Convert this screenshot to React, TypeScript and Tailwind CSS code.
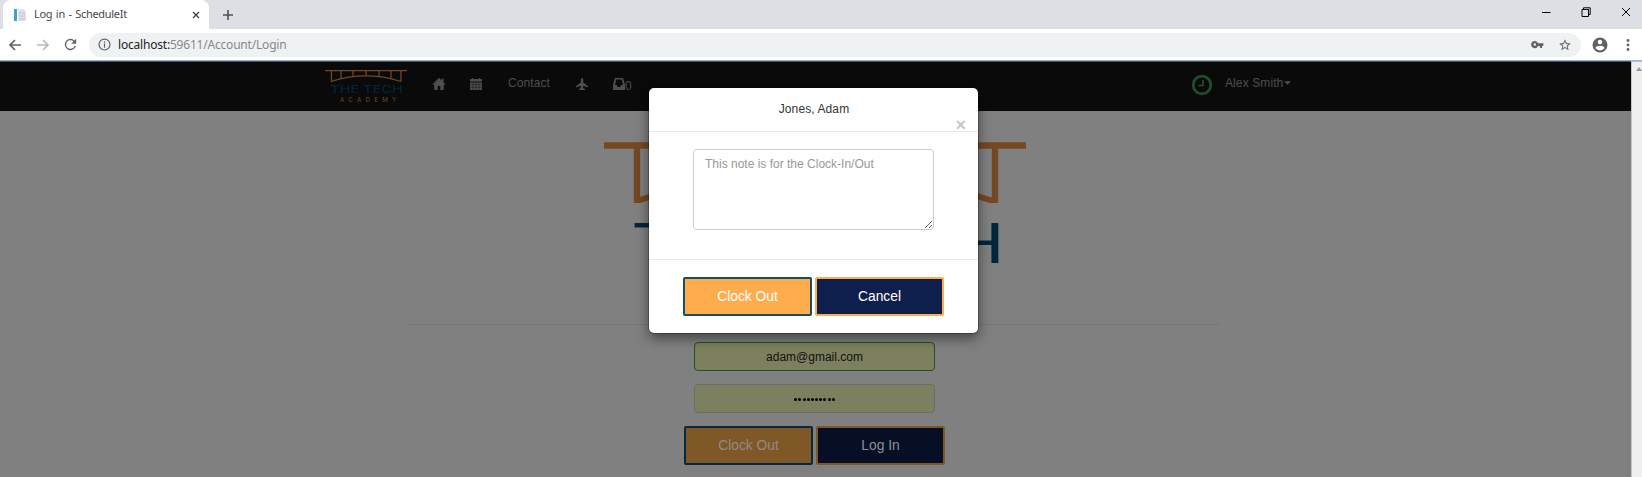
import React from "react";

function Logo({ className, caption }: { className: string; caption?: string }) {
  return (
    <svg viewBox="0 0 422 170" className={className} fill="none">
      <path d="M0 3.5H422M33 3V61M82 3V44M144 3V34M211 3V30M278 3V34M340 3V44M391 3V61" stroke="#754824" strokeWidth="6.4" />
      <path d="M33 58H36Q120 30 211 30T386 58H391" stroke="#754824" strokeWidth="6" />
      <text x="27" y="121" fontSize="55" textLength="374" lengthAdjust="spacingAndGlyphs" fontFamily="Inter, sans-serif" fill="#00273d">THE TECH</text>
      {caption && (
        <text x="77" y="166" fontSize="32" textLength="290" fontFamily="Inter, sans-serif" fill="#754824">{caption}</text>
      )}
    </svg>
  );
}

function Browser() {
  return (
    <header className="flex h-[62px] shrink-0 flex-col font-['Noto_Sans',sans-serif]">
      <div className="flex h-[29px] bg-[#dcdfe4]">
        <div className="ml-[3px] flex w-[206px] items-center rounded-t-lg bg-white pl-[10px] pr-[9px] text-[11px] text-[#45484c]">
          <svg viewBox="0 0 14 14" className="size-[14px]">
            <path d="M1 1H4V13H1z" fill="#459dcb" />
            <path d="M5 1H11L13 4V13H5z" fill="#e0e3e7" />
            <path d="M6 5H12M6 8H12M6 11H12" stroke="#bfc5ce" />
          </svg>
          <span className="ml-[7px] flex-1 whitespace-nowrap tracking-[-0.3px] [word-spacing:1px]">Log in&nbsp;-&nbsp;ScheduleIt</span>
          <svg viewBox="0 0 8 8" className="size-2"><path d="M1 1L7 7M7 1L1 7" stroke="#444" strokeWidth="1.4" /></svg>
        </div>
        <svg viewBox="0 0 12 12" className="ml-[13px] mt-[9px] size-3"><path d="M6 1V11M1 6H11" stroke="#4f5358" strokeWidth="1.6" /></svg>
        <div className="ml-auto mr-[11px] flex items-center gap-[30px] pb-[5px] text-black">
          <svg viewBox="0 0 10 10" className="size-[10px]"><path d="M1 5.5H9.5" stroke="currentColor" /></svg>
          <svg viewBox="0 0 10 10" className="size-[10px]" fill="none"><path d="M1 2.5H7.5V9.5H1zM2.5 2V.8H9.2V7.5H8" stroke="currentColor" /></svg>
          <svg viewBox="0 0 10 10" className="size-[10px]"><path d="M1 1L9 9M9 1L1 9" stroke="currentColor" /></svg>
        </div>
      </div>
      <div className="flex h-[31px] items-center bg-white pl-2 pr-[12px]">
        <svg viewBox="0 0 14 14" className="size-[14px]" fill="none"><path d="M13 7H2M7 2L2 7L7 12" stroke="#5f6368" strokeWidth="1.7" /></svg>
        <svg viewBox="0 0 14 14" className="ml-[14px] size-[14px]" fill="none"><path d="M1 7H12M7 2L12 7L7 12" stroke="#b7b9bc" strokeWidth="1.7" /></svg>
        <svg viewBox="0 0 24 24" className="ml-[12px] size-[17px]"><path fill="#5f6368" d="M17.65 6.35A8 8 0 1 0 19.73 14h-2.08A6 6 0 1 1 12 6c1.66 0 3.14.69 4.22 1.78L13 11h7V4z" /></svg>
        <div className="ml-[10px] flex h-6 flex-1 items-center rounded-full bg-[#eff2f3] pl-[9px] pr-[9px]">
          <svg viewBox="0 0 14 14" className="size-[13px]" fill="none" stroke="#5f6368" strokeWidth="1.3"><circle cx="7" cy="7" r="5.9" /><path d="M7 6V10.5M7 3.5V5" /></svg>
          <span className="ml-[7px] flex-1 text-[12px] tracking-[-0.2px] text-[#85898d]"><span className="text-[#222]">localhost:</span>59611/Account/Login</span>
          <svg viewBox="0 0 14 10" className="mr-[14px] h-[9px] w-[13px]"><path fillRule="evenodd" fill="#5f6368" d="M4 1A4 4 0 1 0 7.6 6.6H9.7V9H12V6.6H13.5V3.5H7.6A4 4 0 0 0 4 1zM4 3.7A1.3 1.3 0 1 1 4 6.4A1.3 1.3 0 0 1 4 3.7z" /></svg>
          <svg viewBox="0 0 24 24" className="size-[14px]"><path fill="#5f6368" d="M22 9.24l-7.19-.62L12 2 9.19 8.63 2 9.24l5.46 4.73L5.82 21 12 17.27 18.18 21l-1.63-7.03zM12 15.4l-3.76 2.27 1-4.28-3.32-2.88 4.38-.38L12 6.1l1.71 4.04 4.38.38-3.32 2.88 1 4.28z" /></svg>
        </div>
        <svg viewBox="0 0 24 24" className="ml-[10px] size-[18px]"><path fill="#5f6368" d="M12 2a10 10 0 1 0 0 20 10 10 0 0 0 0-20zm0 3a3 3 0 1 1 0 6 3 3 0 0 1 0-6zm0 14.2a7.2 7.2 0 0 1-6-3.2c.03-2 4-3.1 6-3.1s5.97 1.1 6 3.1a7.2 7.2 0 0 1-6 3.2z" /></svg>
        <svg viewBox="0 0 4 14" className="ml-[17px] h-[14px] w-1" fill="#5f6368"><circle cx="2" cy="2.5" r="1.4" /><circle cx="2" cy="7" r="1.4" /><circle cx="2" cy="11.5" r="1.4" /></svg>
      </div>
      <div className="h-px bg-[#afb2b5]" />
      <div className="flex h-px bg-[#365585]"><div className="ml-auto w-[11px] bg-[#a2c4f5]" /></div>
    </header>
  );
}

function Navbar() {
  return (
    <nav className="flex h-[49px] bg-[#0a0a0a] pl-[325px] text-[12px] text-[#4e4e4e]">
      <Logo caption="ACADEMY" className="mt-2 h-[33px] w-[82px] shrink-0" />
      <svg viewBox="0 0 14 14" className="ml-[25px] mt-[15px] size-[14px]" fill="currentColor"><path d="M7 .8L9.8 3.6V1.5H11.5V5.3L13.7 7.7H11.8V13H8.3V9H5.7V13H2.2V7.7H.3z" /></svg>
      <svg viewBox="0 0 14 14" className="ml-[23px] mt-[15px] size-[14px]"><path fill="currentColor" d="M1 2H13V4.6H1zM3 1H4V3H3zM10 1H11V3H10zM1 5.4H13V13H1z" /><path d="M1 7.6H13M1 10.3H13M4 6V13M7 6V13M10 6V13" stroke="#0a0a0a" strokeWidth=".4" /></svg>
      <span className="ml-[25px] mt-[12px] w-[42px] tracking-[0.1px]">Contact</span>
      <svg viewBox="0 0 14 14" className="ml-[25px] mt-[15px] size-[14px]" fill="currentColor"><path d="M7 1C6 1 5.8 2.2 5.8 3V5.6L1.2 9V10.5L5.8 8.8V11L4 12.3V13H10V12.3L8.2 11V8.8L12.8 10.5V9L8.2 5.6V3C8.2 2.2 8 1 7 1z" /></svg>
      <svg viewBox="0 0 14 14" className="ml-[23px] mt-[15px] size-[14px]"><path fillRule="evenodd" fill="currentColor" d="M3 1H11L13 7.5V13H1V7.5zM4.2 2.6L3 8H4.7L5.6 10H8.4L9.3 8H11L9.8 2.6z" /></svg>
      <span className="-ml-px mt-[15px] w-[7px]">0</span>
      <svg viewBox="0 0 22 22" className="ml-[559px] mt-[12px] size-[22px]" fill="none" stroke="#1d4f2e"><circle cx="11" cy="11" r="8.8" strokeWidth="2.8" /><path d="M12 6V11.5H7.5" strokeWidth="1.7" /></svg>
      <span className="ml-[12px] mt-[12px] whitespace-nowrap tracking-[0.1px]">Alex Smith</span>
      <svg viewBox="0 0 8 4" className="ml-px mt-[19px] h-1 w-[7px]"><path d="M0 0H8L4 4z" fill="currentColor" /></svg>
    </nav>
  );
}

function LoginPage() {
  return (
    <div className="flex flex-col items-center pr-[2px]">
      <Logo className="mt-[31px] h-[170px] w-[422px]" />
      <div className="mt-[12px] h-px w-[811px] bg-[#777]" />
      <div className="mt-[17px] flex h-[29px] w-[241px] items-center justify-center rounded-[4px] border border-[#1e5128] bg-[#7d805e] pt-px text-[12px] text-[#111]">adam@gmail.com</div>
      <div className="mt-[13px] flex h-[29px] w-[241px] items-center justify-center gap-[1.2px] rounded-[4px] border border-[#6c6c6c] bg-[#7d805e] pt-px">
        {Array.from({ length: 10 }, (_, i) => <span key={i} className="size-[3px] rounded-full bg-black" />)}
      </div>
      <div className="mt-[13px] flex gap-[3px] text-[13.8px]">
        <div className="flex h-[39px] w-[129px] items-center justify-center rounded-[2px] border-2 border-[#052a3e] bg-[#805828] pt-[2px] text-[#928b83]">Clock Out</div>
        <div className="flex h-[39px] w-[129px] items-center justify-center rounded-[2px] border-2 border-[#805828] bg-[#070f27] pt-[2px] text-[#8f8f8f]">Log In</div>
      </div>
    </div>
  );
}

function Modal() {
  return (
    <section className="absolute left-[649px] top-[26px] h-[245px] w-[329px] rounded-[5px] bg-white text-[#333] shadow-[0_5px_13px_rgba(0,0,0,0.5),0_0_0_1px_rgba(0,0,0,0.25)]">
      <div className="flex h-[44px] justify-center border-b border-[#e8e8e8] pt-[12px] pl-px text-[12px] leading-[18px] tracking-[0.1px]">Jones, Adam</div>
      <span className="absolute right-[12px] top-[27px] text-[18px] font-bold leading-5 text-[#c8c8c8]">×</span>
      <textarea readOnly placeholder="This note is for the Clock-In/Out" className="mx-[44px] mt-[17px] block h-[81px] w-[241px] resize rounded-[4px] border border-[#ccc] px-[11px] py-[6px] text-[12px] leading-[17px] outline-none placeholder:text-[#999]" />
      <div className="mt-[29px] flex justify-center gap-[3px] border-t border-[#e8e8e8] pt-[17px] text-[13.8px]">
        <div className="flex h-[39px] w-[129px] items-center justify-center rounded-[2px] border-2 border-[#114f72] bg-[#ffac4d] pt-[2px] text-white">Clock Out</div>
        <div className="flex h-[39px] w-[129px] items-center justify-center rounded-[2px] border-2 border-[#ffac4d] bg-[#0e1f4d] pt-[2px] text-white">Cancel</div>
      </div>
    </section>
  );
}

export default function App() {
  return (
    <div className="flex h-[477px] w-[1642px] flex-col overflow-hidden font-['Liberation_Sans',sans-serif]">
      <Browser />
      <div className="flex flex-1">
        <main className="relative w-[1631px] bg-[#808080]">
          <Navbar />
          <LoginPage />
          <Modal />
        </main>
        <div className="flex flex-1 justify-end border-l border-[#c4c4c4] bg-[#efefef]">
          <svg viewBox="0 0 6 4" className="mt-[5px] h-1 w-[6px]"><path d="M0 4L3 0L6 4z" fill="#999" /></svg>
        </div>
      </div>
    </div>
  );
}
